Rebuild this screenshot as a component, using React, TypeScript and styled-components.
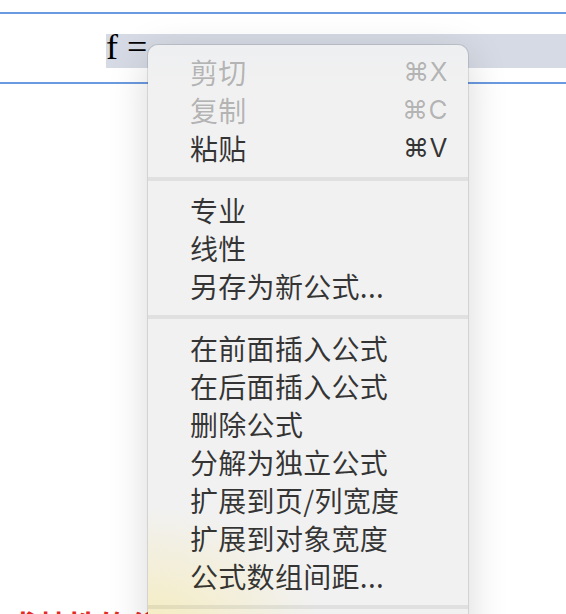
import React from "react";
import styled, { createGlobalStyle } from "styled-components";

const Global = createGlobalStyle`
  html, body {
    margin: 0;
    padding: 0;
    background: #ffffff;
    overflow: hidden;
  }
  * { box-sizing: border-box; }
`;

const Page = styled.div`
  position: relative;
  width: 566px;
  height: 614px;
  overflow: hidden;
  padding-top: 12px;
  background: #ffffff;
`;

const Rule = styled.div<{ $gap?: number }>`
  height: 2px;
  margin-top: ${(p) => p.$gap ?? 0}px;
  background: #6b9ae0;
`;

const EquationRow = styled.div`
  display: flex;
  margin-top: 20px;
  padding-left: 106px;
  height: 34px;
`;

const Highlight = styled.div`
  flex: 1;
  display: flex;
  align-items: flex-start;
  background: #d5dae4;
`;

const Formula = styled.span`
  font-family: "Liberation Serif", "Times New Roman", serif;
  font-size: 36px;
  line-height: 26px;
  color: #000000;
  white-space: pre;
`;

const Note = styled.div`
  margin-top: 522px;
  padding-left: 8px;
  font-family: "Noto Sans CJK SC", "Noto Sans", sans-serif;
  font-weight: 700;
  font-size: 30px;
  line-height: 36px;
  color: #e6291f;
  white-space: nowrap;
`;

const Menu = styled.div`
  position: absolute;
  left: 148px;
  top: 45px;
  width: 320px;
  padding: 8px 0 0;
  border-radius: 10px;
  background:
    radial-gradient(ellipse 230px 170px at 0px 590px, rgba(246, 236, 186, 0.95), rgba(246, 236, 186, 0) 75%),
    linear-gradient(180deg, #eeeff1 0px, #f1f1f1 40px, #f1f1f1 100%);
  box-shadow:
    0 0 0 1px rgba(0, 0, 0, 0.1),
    0 10px 40px rgba(0, 0, 0, 0.16);
  font-family: "Noto Sans CJK SC", "Noto Sans", sans-serif;
`;

const Item = styled.div<{ $disabled?: boolean }>`
  display: flex;
  align-items: center;
  justify-content: space-between;
  height: 38px;
  padding: 0 20px 0 42px;
  font-size: 28px;
  color: ${(p) => (p.$disabled ? "rgba(0,0,0,0.27)" : "rgba(0,0,0,0.78)")};
  white-space: nowrap;
`;

const Label = styled.span`
  line-height: 38px;
  letter-spacing: 0.3px;
`;

const Shortcut = styled.span`
  font-family: "Inter", "DejaVu Sans", sans-serif;
  font-size: 26px;
  line-height: 38px;
  letter-spacing: 0.5px;
`;

const Separator = styled.div`
  height: 4px;
  margin: 10px 0;
  background: rgba(0, 0, 0, 0.07);
`;

type Entry = { label: string; shortcut?: string; disabled?: boolean };

const groups: Entry[][] = [
  [
    { label: "剪切", shortcut: "⌘X", disabled: true },
    { label: "复制", shortcut: "⌘C", disabled: true },
    { label: "粘贴", shortcut: "⌘V" },
  ],
  [{ label: "专业" }, { label: "线性" }, { label: "另存为新公式..." }],
  [
    { label: "在前面插入公式" },
    { label: "在后面插入公式" },
    { label: "删除公式" },
    { label: "分解为独立公式" },
    { label: "扩展到页/列宽度" },
    { label: "扩展到对象宽度" },
    { label: "公式数组间距..." },
  ],
  [{ label: "字体..." }],
];

export default function App() {
  return (
    <>
      <Global />
      <Page>
        <Rule />
        <EquationRow>
          <Highlight>
            <Formula>f =</Formula>
          </Highlight>
        </EquationRow>
        <Rule $gap={14} />
        <Note>求特性的分布规律</Note>
        <Menu>
          {groups.map((g, gi) => (
            <React.Fragment key={gi}>
              {gi > 0 && <Separator />}
              {g.map((e) => (
                <Item key={e.label} $disabled={e.disabled}>
                  <Label>{e.label}</Label>
                  {e.shortcut && <Shortcut>{e.shortcut}</Shortcut>}
                </Item>
              ))}
            </React.Fragment>
          ))}
        </Menu>
      </Page>
    </>
  );
}
